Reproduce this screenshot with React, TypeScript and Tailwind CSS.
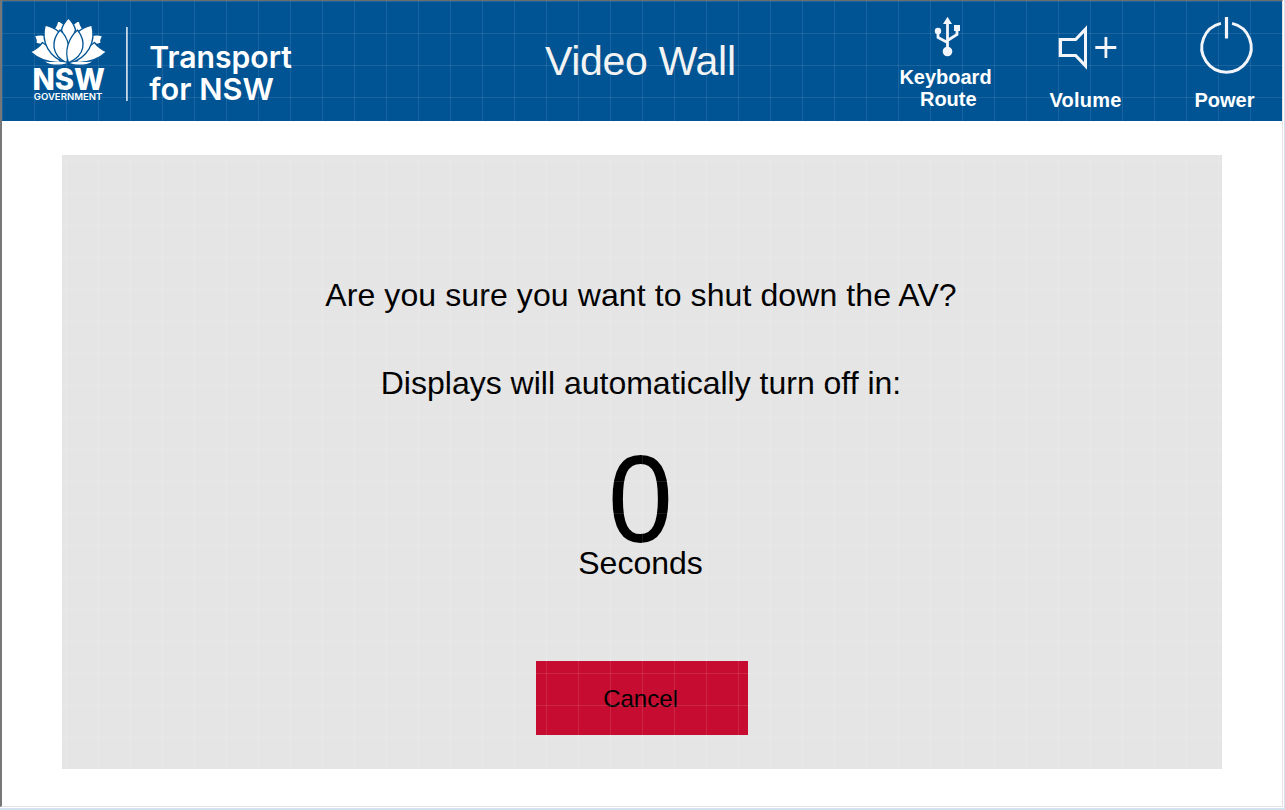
import type { ReactNode } from "react";

function Logo() {
  return (
    <svg width="270" height="90" viewBox="28 16 270 90" className="block" fill="#fff" role="img">
      <g stroke="#005494" strokeWidth="1.3" strokeLinejoin="round">
        <path d="M34.500 36 C38 34.500 42 34.500 45.500 35.500 L47 46 L36 43.500 C36.500 41 36 38.500 34.500 36 Z" />
        <path d="M102.500 36 C99 34.500 95 34.500 91.500 35.500 L90 46 L101 43.500 C100.500 41 101 38.500 102.500 36 Z" />
        <path d="M57.800 20.200 C60 21.500 62.500 23 64.500 25 L62 33 L54 29.500 C56 26.500 57.500 23.500 57.800 20.200 Z" />
        <path d="M79.200 20.200 C77 21.500 74.500 23 72.500 25 L75 33 L83 29.500 C81 26.500 79.500 23.500 79.200 20.200 Z" />
        <path d="M30.300 51.700 C35.500 49.500 39.500 46.500 42.500 42.500 C49 46.500 54 53 61 62.300 C49 63 39 59.500 30.300 51.700 Z" />
        <path d="M106.700 51.700 C101.500 49.500 97.500 46.500 94.500 42.500 C88 46.500 83 53 76 62.300 C88 63 98 59.500 106.700 51.700 Z" />
        <path d="M45.200 25.200 C50 26.500 55 28.500 59 32 L65.500 62.500 C50 57.500 40.500 43 45.200 25.200 Z" />
        <path d="M91.800 25.200 C87 26.500 82 28.500 78 32 L71.500 62.500 C87 57.500 96.500 43 91.800 25.200 Z" />
        <path d="M68.500 18 C72 21.500 74.500 25.500 75.500 30 L68.500 48 L61.500 30 C62.500 25.500 65 21.500 68.500 18 Z" />
        <path d="M60 30 C51 41 51 55 66.500 62.800 C71.500 51 69 38 60 30 Z" />
        <path d="M77.500 30 C86 41 86 55 68.500 62.800 C64 51 68.500 38 77.500 30 Z" />
      </g>
      <path d="M45 61.400 C53 62.700 60 60.800 67 63 C61 65.500 50 65.200 45 61.400 Z" />
      <path d="M92 61.400 C84 62.700 77 60.800 70 63 C76 65.500 87 65.200 92 61.400 Z" />
      <g fontFamily="Inter, sans-serif">
        <text x="32.500" y="89.600" fontSize="30" fontWeight="800" textLength="72.500" lengthAdjust="spacingAndGlyphs">NSW</text>
        <text x="33.800" y="99.600" fontSize="9.500" fontWeight="600" textLength="68.500" lengthAdjust="spacingAndGlyphs">GOVERNMENT</text>
      </g>
      <rect x="126" y="27" width="1.800" height="74" fill="#c5d8e8" />
      <g fontFamily="Inter, sans-serif" fontWeight="600">
        <text x="149.300" y="67.500" fontSize="30.500" textLength="142.500" lengthAdjust="spacingAndGlyphs">Transport</text>
        <text x="149.300" y="99.600" fontSize="30.500" textLength="124.500" lengthAdjust="spacingAndGlyphs">for NSW</text>
      </g>
    </svg>
  );
}

function Action({ icon, children }: { icon: ReactNode; children: ReactNode }) {
  return (
    <button className="flex h-[110px] w-[139px] flex-col items-center justify-between pt-[15px] text-center text-[20px] leading-[22px] font-bold text-white">
      {icon}
      <span>{children}</span>
    </button>
  );
}

function UsbIcon() {
  return (
    <svg width="30" height="42" viewBox="932 16 30 42" fill="#f3f5fa">
      <path d="M947.500 16.800 L952 24 H943 Z" />
      <path d="M947.500 23 V50 M938 32 V37.500 L947.500 42.500 M957 29 V34.500 L947.500 40.500" fill="none" stroke="#f3f5fa" strokeWidth="2.800" />
      <circle cx="938" cy="31" r="3.200" />
      <rect x="954" y="25" width="6" height="6" />
      <circle cx="947.500" cy="51.500" r="4.800" />
    </svg>
  );
}

function VolumeIcon() {
  return (
    <svg width="60" height="56" viewBox="1056 16 60 56" className="overflow-visible" fill="#f3f5fa">
      <path
        fillRule="evenodd"
        d="M1058.700 38 H1075 L1087 25.300 V69.700 L1075 57 H1058.700 Z M1062 41 V54 H1076.300 L1084 62 V33 L1076.300 41 Z"
      />
      <path d="M1095.300 47.500 H1116.300 M1105.900 37 V58" stroke="#f3f5fa" strokeWidth="2.800" />
    </svg>
  );
}

function PowerIcon() {
  return (
    <svg width="56" height="60" viewBox="1197 16 56 60" className="overflow-visible" fill="none" stroke="#f3f5fa" strokeWidth="3">
      <path d="M1220.900 23.400 A24.700 24.700 0 1 0 1232.100 23.400" />
      <path d="M1226.500 17 V38.500" strokeWidth="3.200" />
    </svg>
  );
}

export default function App() {
  return (
    <div className="h-[810px] w-[1285px] overflow-hidden border-r border-b-2 border-[#d6e1f0] bg-white font-['Liberation_Sans',sans-serif]">
      <div className="relative h-[807px] w-[1283px] border-t border-r border-b border-l-2 border-t-[#6d6d6d] border-r-[#e4e2de] border-b-[#e4e2de] border-l-[#777777]">
        <header className="grid h-[120px] grid-cols-[543px_190px_1fr] bg-[#005494]">
          <div className="pt-[15px] pl-[26px]">
            <Logo />
          </div>
          <h1 className="pt-[37px] text-[41px] leading-[46px] tracking-[-0.3px] whitespace-nowrap text-[#f3f3f3]">
            Video Wall
          </h1>
          <div className="-mr-3 flex justify-end">
            <Action icon={<UsbIcon />}>
              <span className="-ml-0.5 block pb-px">
                Keyboard
                <br />
                &nbsp;Route
              </span>
            </Action>
            <Action icon={<VolumeIcon />}>
              <span className="tracking-[0.2px]">Volume</span>
            </Action>
            <Action icon={<PowerIcon />}>Power</Action>
          </div>
        </header>
        <main className="mt-[34px] ml-[60px] flex h-[614px] w-[1160px] flex-col items-center bg-[#e5e5e5] text-center text-black">
          <p className="mt-[121px] mr-0.5 text-[32px] leading-[38px] tracking-[0.1px]">
            Are you sure you want to shut down the AV?
          </p>
          <p className="mt-[50px] mr-0.5 text-[32px] leading-[38px]">Displays will automatically turn off in:</p>
          <p className="mt-[52px] mr-[3px] scale-x-[0.94] text-[124px] leading-[90px]">0</p>
          <p className="mr-[3px] text-[32px] leading-[38px]">Seconds</p>
          <button className="mt-[79px] h-[74px] w-[212px] bg-[#c60c30] pt-0.5 pr-[3px] text-[24px]">Cancel</button>
        </main>
        <div className="pointer-events-none absolute inset-0 bg-[linear-gradient(to_right,rgba(255,255,255,0.1)_1px,transparent_1px),linear-gradient(to_bottom,rgba(255,255,255,0.1)_1px,transparent_1px)] bg-[size:32px_32px]" />
      </div>
    </div>
  );
}
